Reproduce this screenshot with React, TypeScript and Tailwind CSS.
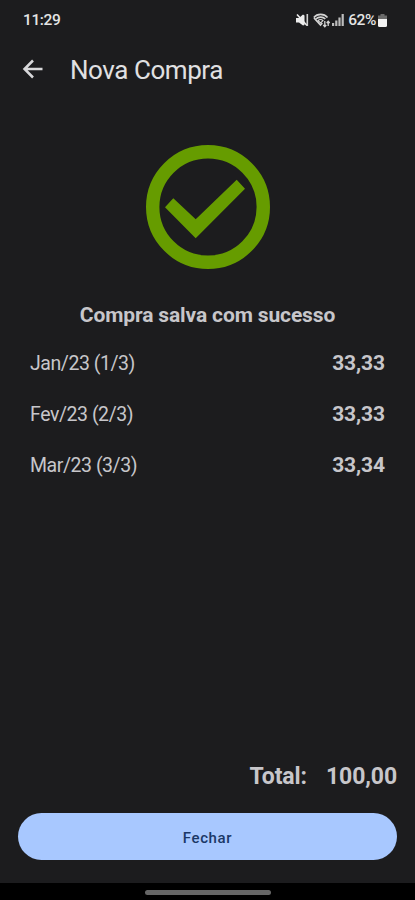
const installments = [
  { label: "Jan/23 (1/3)", value: "33,33" },
  { label: "Fev/23 (2/3)", value: "33,33" },
  { label: "Mar/23 (3/3)", value: "33,34" },
];

function StatusIcons() {
  return (
    <div className="flex items-center">
      {/* Muted */}
      <svg className="w-[13px] h-[14px]" viewBox="0 0 13 14" fill="#ededed">
        <path d="M0 5h3l4-3.500 1.500 1v9.500L7 12.500 3 9.500H0z" />
        <path d="M1 1.500l10 11" stroke="#ededed" strokeWidth="1.600" />
        <path d="M11.300 1v12" stroke="#d0d0d0" strokeWidth="1.600" />
      </svg>
      {/* Wifi */}
      <svg className="w-[18px] h-[15px] ml-[4px]" viewBox="0 0 18 15" fill="none" stroke="#d4d4d4" strokeWidth="1.600">
        <path d="M.8 4.500C4.300.3 11 .3 14.500 4.500M3 6c2.300-2.500 7-2.500 9.300 0M1 5l6.500 7L9.300 10" />
        <path d="M5 7.600c1.300-1.300 3.700-1.300 5 0L7.700 10z" strokeWidth="1.200" />
        <path d="M11.800 8v5.500M10.300 12l1.500 1.700 1.500-1.700M15.200 13V8.500M13.700 10l1.500-1.700 1.500 1.700" strokeWidth="1.300" />
      </svg>
      {/* Signal */}
      <svg className="w-[12px] h-[12px] ml-px" viewBox="0 0 12 12" fill="#bdbdbd">
        <path d="M0 9h2.200v3H0zM3.200 6.500h2.200V12H3.200zM6.400 3.500h2.200V12H6.400zM9.600 0h2.200v12H9.600z" />
      </svg>
      <span className="ml-[4px] pt-px text-[15.500px] font-medium leading-none tracking-[-0.400px]">62%</span>
      {/* Battery */}
      <svg className="w-[9px] h-[13px] ml-[2px]" viewBox="0 0 9 13">
        <path d="M2.500 0h4v1.500H9V6H0V1.500h2.500z" fill="#6b6b6b" />
        <path d="M0 5h9v6.500Q9 13 7.500 13h-6Q0 13 0 11.500z" fill="#f2f2f2" />
      </svg>
    </div>
  );
}

export default function App() {
  return (
    <div className="flex flex-col w-full h-[900px] bg-[#1c1c1e] text-[#c7c6ca] font-['Roboto',sans-serif] overflow-hidden">
      {/* Status bar */}
      <div className="flex items-center justify-between h-10 pl-[23px] pr-[28px] text-[#e4e4e4]">
        <span className="pt-[2px] text-[15.500px] font-medium leading-none tracking-[-0.400px]">11:29</span>
        <StatusIcons />
      </div>

      {/* App bar */}
      <header className="flex items-center h-[60px] pl-[22px]">
        <svg className="w-[22px] h-[20px] -mt-[2px]" viewBox="0 0 22 20" fill="none" stroke="#d8d8da" strokeWidth="2.500">
          <path d="M20.500 10H3M11 1.500L2.500 10l8.500 8.500" />
        </svg>
        <h1 className="ml-[26px] text-[26px] leading-none tracking-[-0.450px] text-[#e0e0e2]">Nova Compra</h1>
      </header>

      {/* Confirmation */}
      <section className="flex flex-col items-center pt-[45px]">
        <svg className="w-[124px] h-[124px]" viewBox="0 0 124 124">
          <circle cx="62" cy="62" r="55.300" fill="none" stroke="#669c00" strokeWidth="13.400" />
          <path d="M19 62.300l8.300-9 22.400 21 41-39.600 8.300 9-49.300 49.600z" fill="#669c00" />
        </svg>
        <h2 className="mt-[34px] text-[21px] leading-6 font-bold tracking-[-0.130px]">Compra salva com sucesso</h2>
      </section>

      <ul className="mt-[11px] pl-[30px] pr-[30px]">
        {installments.map((item) => (
          <li key={item.label} className="flex items-center justify-between h-[51px]">
            <span className="text-[19.500px] tracking-[-0.450px]">{item.label}</span>
            <span className="pt-px text-[21px] font-bold tracking-[-0.100px]">{item.value}</span>
          </li>
        ))}
      </ul>

      {/* Total and close */}
      <footer className="mt-auto">
        <div className="flex justify-end gap-[19px] pr-[18px] text-[23px] leading-7 font-bold tracking-[-0.100px]">
          <span>Total:</span>
          <span>100,00</span>
        </div>
        <div className="px-[18px] pt-[22px] pb-[23px]">
          <button className="block w-full h-[47px] pt-[3px] rounded-full bg-[#a8c8ff] text-[#1b3867] text-[15px] font-medium tracking-[0.600px]">
            Fechar
          </button>
        </div>
        <div className="flex justify-center h-[17px] pt-[7px] bg-black">
          <div className="w-[126px] h-[5px] rounded-full bg-[#666666]"></div>
        </div>
      </footer>
    </div>
  );
}
